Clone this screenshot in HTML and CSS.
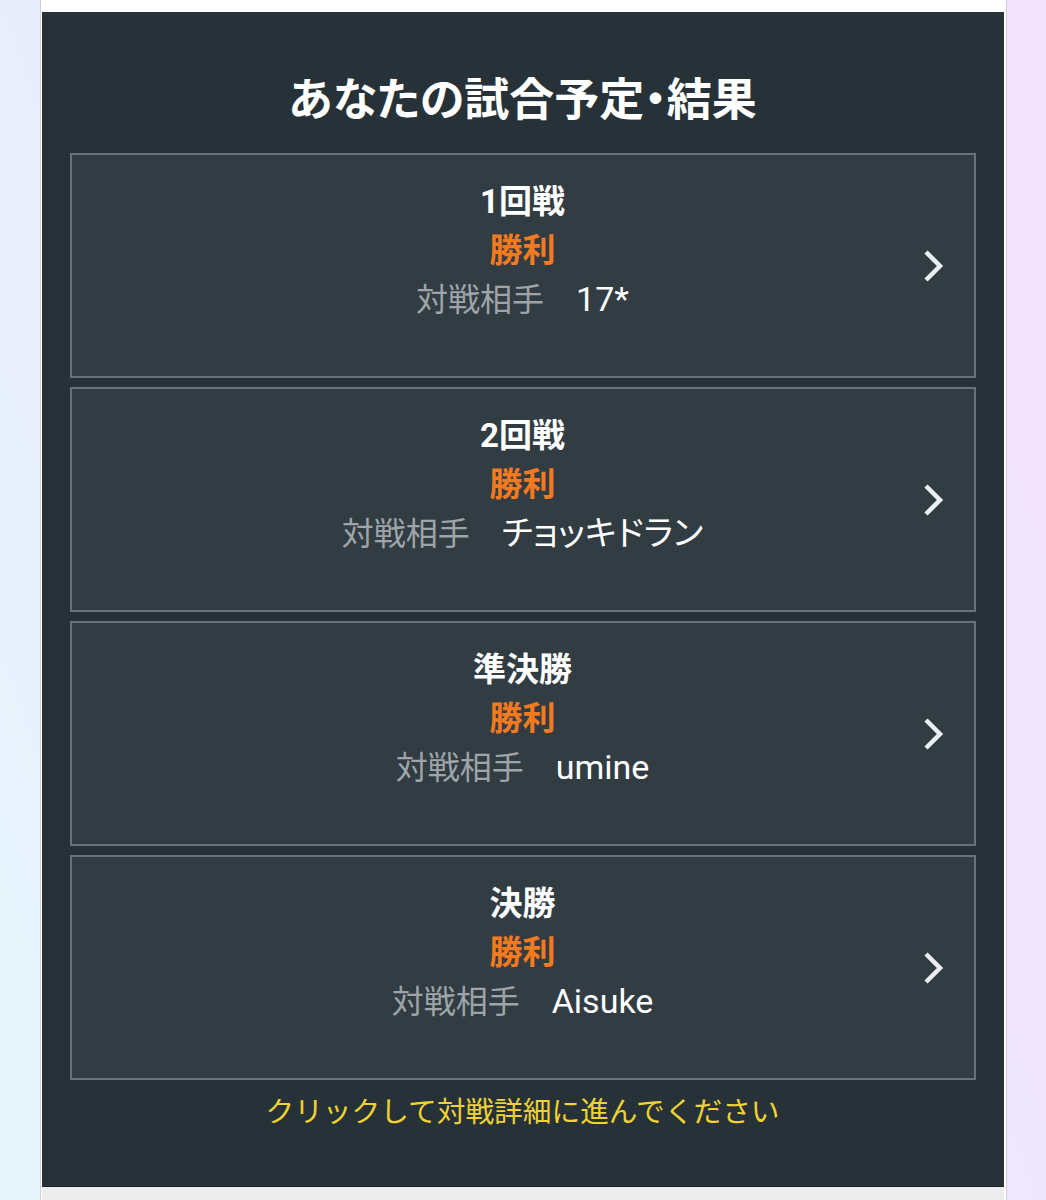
FILE: index.html
```html
<!DOCTYPE html>
<html lang="ja">
<head>
    <meta charset="UTF-8">
    <meta name="viewport" content="width=device-width, initial-scale=1.0">
    <title>あなたの試合予定・結果</title>
    <link rel="stylesheet" href="styles.css">
</head>
<body>
    <div class="page">
        <div class="schedule">
            <h1>あなたの試合予定・結果</h1>
            <div class="match-list">
                <a class="match-card" href="#">
                    <div class="match-info">
                        <div class="round">1回戦</div>
                        <div class="result">勝利</div>
                        <div class="opponent"><span class="label">対戦相手</span>　<span class="name">17*</span></div>
                    </div>
                    <svg class="chevron" width="24" height="36" viewBox="0 0 24 36"><polyline points="4,4 18,18 4,32" fill="none" stroke="#eceff1" stroke-width="4.5"/></svg>
                </a>
                <a class="match-card" href="#">
                    <div class="match-info">
                        <div class="round">2回戦</div>
                        <div class="result">勝利</div>
                        <div class="opponent"><span class="label">対戦相手</span>　<span class="name">チョッキドラン</span></div>
                    </div>
                    <svg class="chevron" width="24" height="36" viewBox="0 0 24 36"><polyline points="4,4 18,18 4,32" fill="none" stroke="#eceff1" stroke-width="4.5"/></svg>
                </a>
                <a class="match-card" href="#">
                    <div class="match-info">
                        <div class="round">準決勝</div>
                        <div class="result">勝利</div>
                        <div class="opponent"><span class="label">対戦相手</span>　<span class="name">umine</span></div>
                    </div>
                    <svg class="chevron" width="24" height="36" viewBox="0 0 24 36"><polyline points="4,4 18,18 4,32" fill="none" stroke="#eceff1" stroke-width="4.5"/></svg>
                </a>
                <a class="match-card" href="#">
                    <div class="match-info">
                        <div class="round">決勝</div>
                        <div class="result">勝利</div>
                        <div class="opponent"><span class="label">対戦相手</span>　<span class="name">Aisuke</span></div>
                    </div>
                    <svg class="chevron" width="24" height="36" viewBox="0 0 24 36"><polyline points="4,4 18,18 4,32" fill="none" stroke="#eceff1" stroke-width="4.5"/></svg>
                </a>
            </div>
            <p class="hint">クリックして対戦詳細に進んでください</p>
        </div>
        <div class="page-foot"></div>
    </div>
</body>
</html>
```

FILE: styles.css
```css
body {
    margin: 0;
    min-height: 1200px;
    font-family: Roboto, "Noto Sans CJK JP", sans-serif;
    background: linear-gradient(70deg, #e5f5fc 0%, #ebeafb 45%, #f4e3fc 100%);
}
.page {
    width: 962px;
    margin: 0 auto;
    padding: 12px 2px 0 1px;
    background-color: #fff;
    border-left: 1px solid #cfcfd4;
    border-right: 1px solid #cfcfd4;
}
.schedule {
    background-color: #263238;
    padding: 0 28px 54px;
    border-bottom: 1px solid #1b2226;
}
h1 {
    margin: 0 0 24px;
    padding-top: 61px;
    line-height: 56px;
    height: 56px;
    font-size: 45px;
    font-weight: bold;
    font-feature-settings: "palt";
    color: #fff;
    text-align: center;
}
.match-list {
    display: flex;
    flex-direction: column;
    gap: 9px;
}
.match-card {
    display: grid;
    grid-template-columns: 80px 1fr 80px;
    align-items: center;
    background-color: #323c43;
    border: 2px solid #67737a;
    text-decoration: none;
}
.match-info {
    grid-column: 2;
    padding: 22px 0 52px;
    text-align: center;
    font-size: 32px;
    line-height: 49px;
}
.round {
    color: #fff;
    font-size: 33px;
    font-weight: bold;
}
.result {
    color: #f47a20;
    font-size: 33px;
    font-weight: bold;
}
.opponent {
    height: 49px;
    color: #fff;
}
.label {
    color: #9ea4a8;
}
.name {
    font-size: 34px;
    font-feature-settings: "palt";
}
.chevron {
    grid-column: 3;
    justify-self: center;
}
.hint {
    margin: 12px 0 0;
    line-height: 40px;
    font-size: 28.7px;
    color: #f0d232;
    text-align: center;
}
.page-foot {
    height: 40px;
    background-color: #ececec;
}
```
